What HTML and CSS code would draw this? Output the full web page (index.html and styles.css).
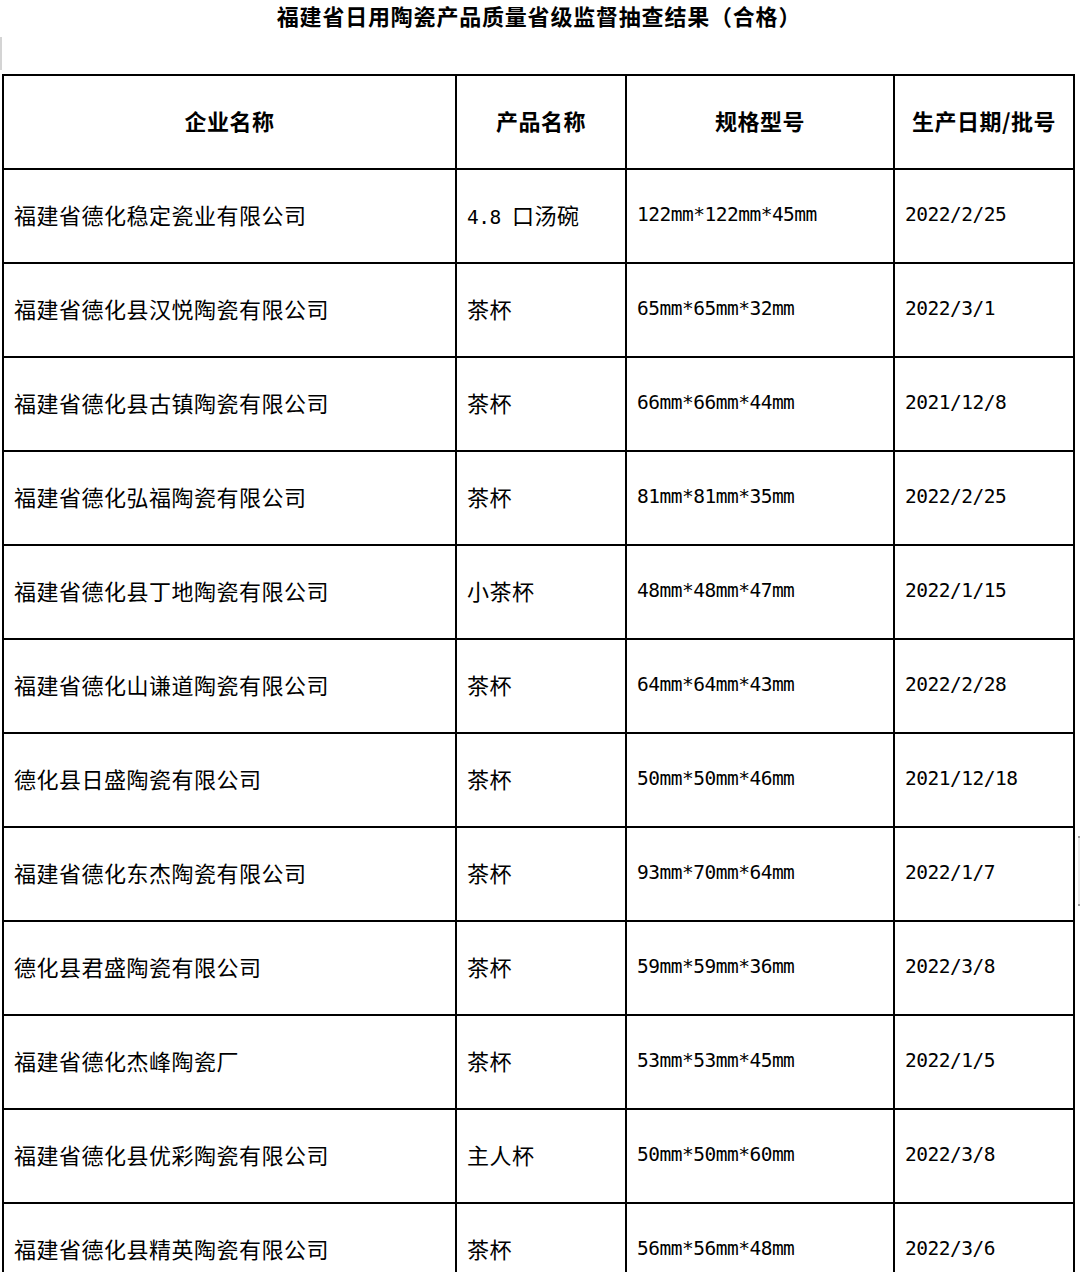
FILE: index.html
```html
<!DOCTYPE html>
<html lang="zh-CN">
<head>
<meta charset="utf-8">
<title>福建省日用陶瓷产品质量省级监督抽查结果（合格）</title>
<link rel="stylesheet" href="styles.css">
</head>
<body>
<div class="page">
  <h1 class="title">福建省日用陶瓷产品质量省级监督抽查结果（合格）</h1>
  <div class="table">
    <div class="cell head"><span>企业名称</span></div>
    <div class="cell head"><span>产品名称</span></div>
    <div class="cell head"><span>规格型号</span></div>
    <div class="cell head"><span>生产日期/批号</span></div>

    <div class="cell"><span>福建省德化稳定瓷业有限公司</span></div>
    <div class="cell"><span><span class="num">4.8 </span>口汤碗</span></div>
    <div class="cell num"><span>122mm*122mm*45mm</span></div>
    <div class="cell num"><span>2022/2/25</span></div>

    <div class="cell"><span>福建省德化县汉悦陶瓷有限公司</span></div>
    <div class="cell"><span>茶杯</span></div>
    <div class="cell num"><span>65mm*65mm*32mm</span></div>
    <div class="cell num"><span>2022/3/1</span></div>

    <div class="cell"><span>福建省德化县古镇陶瓷有限公司</span></div>
    <div class="cell"><span>茶杯</span></div>
    <div class="cell num"><span>66mm*66mm*44mm</span></div>
    <div class="cell num"><span>2021/12/8</span></div>

    <div class="cell"><span>福建省德化弘福陶瓷有限公司</span></div>
    <div class="cell"><span>茶杯</span></div>
    <div class="cell num"><span>81mm*81mm*35mm</span></div>
    <div class="cell num"><span>2022/2/25</span></div>

    <div class="cell"><span>福建省德化县丁地陶瓷有限公司</span></div>
    <div class="cell"><span>小茶杯</span></div>
    <div class="cell num"><span>48mm*48mm*47mm</span></div>
    <div class="cell num"><span>2022/1/15</span></div>

    <div class="cell"><span>福建省德化山谦道陶瓷有限公司</span></div>
    <div class="cell"><span>茶杯</span></div>
    <div class="cell num"><span>64mm*64mm*43mm</span></div>
    <div class="cell num"><span>2022/2/28</span></div>

    <div class="cell"><span>德化县日盛陶瓷有限公司</span></div>
    <div class="cell"><span>茶杯</span></div>
    <div class="cell num"><span>50mm*50mm*46mm</span></div>
    <div class="cell num"><span>2021/12/18</span></div>

    <div class="cell"><span>福建省德化东杰陶瓷有限公司</span></div>
    <div class="cell"><span>茶杯</span></div>
    <div class="cell num"><span>93mm*70mm*64mm</span></div>
    <div class="cell num"><span>2022/1/7</span></div>

    <div class="cell"><span>德化县君盛陶瓷有限公司</span></div>
    <div class="cell"><span>茶杯</span></div>
    <div class="cell num"><span>59mm*59mm*36mm</span></div>
    <div class="cell num"><span>2022/3/8</span></div>

    <div class="cell"><span>福建省德化杰峰陶瓷厂</span></div>
    <div class="cell"><span>茶杯</span></div>
    <div class="cell num"><span>53mm*53mm*45mm</span></div>
    <div class="cell num"><span>2022/1/5</span></div>

    <div class="cell"><span>福建省德化县优彩陶瓷有限公司</span></div>
    <div class="cell"><span>主人杯</span></div>
    <div class="cell num"><span>50mm*50mm*60mm</span></div>
    <div class="cell num"><span>2022/3/8</span></div>

    <div class="cell"><span>福建省德化县精英陶瓷有限公司</span></div>
    <div class="cell"><span>茶杯</span></div>
    <div class="cell num"><span>56mm*56mm*48mm</span></div>
    <div class="cell num"><span>2022/3/6</span></div>
  </div>
  <div class="mark mark-left"></div>
  <div class="mark mark-right"></div>
</div>
</body>
</html>
```

FILE: styles.css
```css
html, body {
  margin: 0;
  padding: 0;
  background: #ffffff;
}

body {
  font-family: "Noto Sans CJK SC", "Noto Sans", sans-serif;
  color: #000000;
}

.page {
  position: relative;
  padding-left: 2px;
  width: 1078px;
}

.title {
  margin: 0;
  height: 74px;
  box-sizing: border-box;
  padding: 0 4px 0 0;
  font-size: 22px;
  font-weight: 700;
  line-height: 30px;
  text-align: center;
  letter-spacing: 0.8px;
}

.table {
  display: grid;
  grid-template-columns: 453px 170px 268px 180px;
  grid-auto-rows: 94px;
  border-left: 2px solid #000;
  border-top: 2px solid #000;
  width: max-content;
}

.cell {
  border-right: 2px solid #000;
  border-bottom: 2px solid #000;
  display: flex;
  align-items: center;
  padding: 0 0 5px 10px;
  font-size: 22px;
  letter-spacing: 0.5px;
  white-space: pre;
  overflow: hidden;
}

.head {
  justify-content: center;
  padding-left: 0;
  font-weight: 700;
}

.num {
  font-family: "DejaVu Sans Mono", "Liberation Mono", monospace;
  font-size: 19.5px;
  letter-spacing: -0.5px;
}

.cell.num {
  padding-bottom: 3px;
}

.mark {
  position: absolute;
  background: #d4d4d4;
}

.mark-left {
  left: 0;
  top: 37px;
  width: 2px;
  height: 33px;
}

.mark-right {
  left: 1078px;
  top: 836px;
  width: 2px;
  height: 70px;
  background: #e8e8e8;
  border-top: 2px solid #9a9a9a;
  border-bottom: 2px solid #9a9a9a;
  box-sizing: border-box;
}
```
